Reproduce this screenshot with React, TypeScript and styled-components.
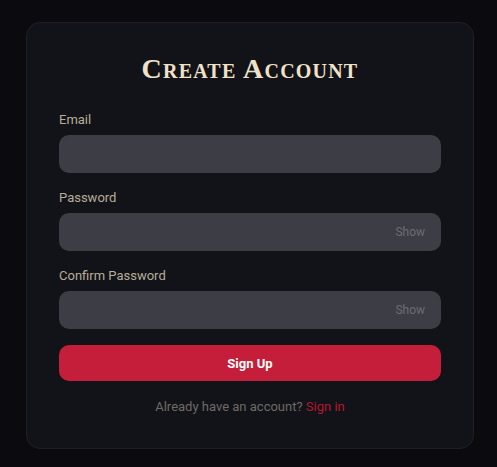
import styled, { createGlobalStyle } from 'styled-components';

const GlobalStyle = createGlobalStyle`
  html, body {
    margin: 0;
    padding: 0;
    background: #0b0b0f;
  }
  body {
    font-family: Roboto, "Liberation Sans", sans-serif;
  }
`;

const Page = styled.main`
  min-height: 467px;
  padding-left: 3px;
  display: flex;
  justify-content: center;
  align-items: flex-start;
`;

const Card = styled.form`
  margin-top: 22px;
  width: 448px;
  box-sizing: border-box;
  padding: 32px;
  background: #121318;
  border: 1px solid #1f2026;
  border-radius: 14px;
  display: flex;
  flex-direction: column;
`;

const Title = styled.h1`
  margin: -2px 0 27px;
  text-align: center;
  font-family: "Liberation Serif", "DejaVu Serif", serif;
  font-variant: small-caps;
  font-weight: 700;
  font-size: 28px;
  line-height: 31px;
  letter-spacing: 1.2px;
  color: #f0e2c8;
`;

const Field = styled.div`
  display: flex;
  flex-direction: column;
  margin-bottom: 16px;
`;

const Label = styled.label`
  font-size: 13px;
  line-height: 18px;
  color: #b8ad98;
  margin-bottom: 6px;
`;

const InputWrap = styled.div`
  display: flex;
  align-items: center;
  height: 38px;
  background: #3d3d46;
  border-radius: 10px;
`;

const Input = styled.input`
  flex: 1;
  height: 100%;
  border: none;
  outline: none;
  background: transparent;
  padding: 0 14px;
  color: #e8e8ea;
  font: inherit;
  font-size: 14px;
`;

const ShowToggle = styled.button`
  border: none;
  background: transparent;
  color: #6c6c73;
  font: inherit;
  font-size: 12px;
  padding: 0 16px 0 8px;
  cursor: pointer;
`;

const Submit = styled.button`
  height: 36px;
  border: none;
  border-radius: 10px;
  background: #c41e3a;
  color: #ffffff;
  font: inherit;
  font-weight: 700;
  font-size: 13px;
  cursor: pointer;
`;

const Footer = styled.p`
  margin: 17px 0 0;
  text-align: center;
  font-size: 13px;
  line-height: 18px;
  color: #6e6a64;
`;

const SignIn = styled.a`
  color: #b3182f;
  text-decoration: none;
`;

type FieldProps = { label: string; type?: string; toggle?: boolean };

const FormField = ({ label, type = 'text', toggle }: FieldProps) => (
  <Field>
    <Label>{label}</Label>
    <InputWrap>
      <Input type={type} />
      {toggle && <ShowToggle type="button">Show</ShowToggle>}
    </InputWrap>
  </Field>
);

const App = () => {
  return (
    <>
      <GlobalStyle />
      <Page>
        <Card onSubmit={(e) => e.preventDefault()}>
          <Title>Create Account</Title>
          <FormField label="Email" type="email" />
          <FormField label="Password" type="password" toggle />
          <FormField label="Confirm Password" type="password" toggle />
          <Submit type="submit">Sign Up</Submit>
          <Footer>
            Already have an account? <SignIn href="#">Sign in</SignIn>
          </Footer>
        </Card>
      </Page>
    </>
  );
};

export default App;
